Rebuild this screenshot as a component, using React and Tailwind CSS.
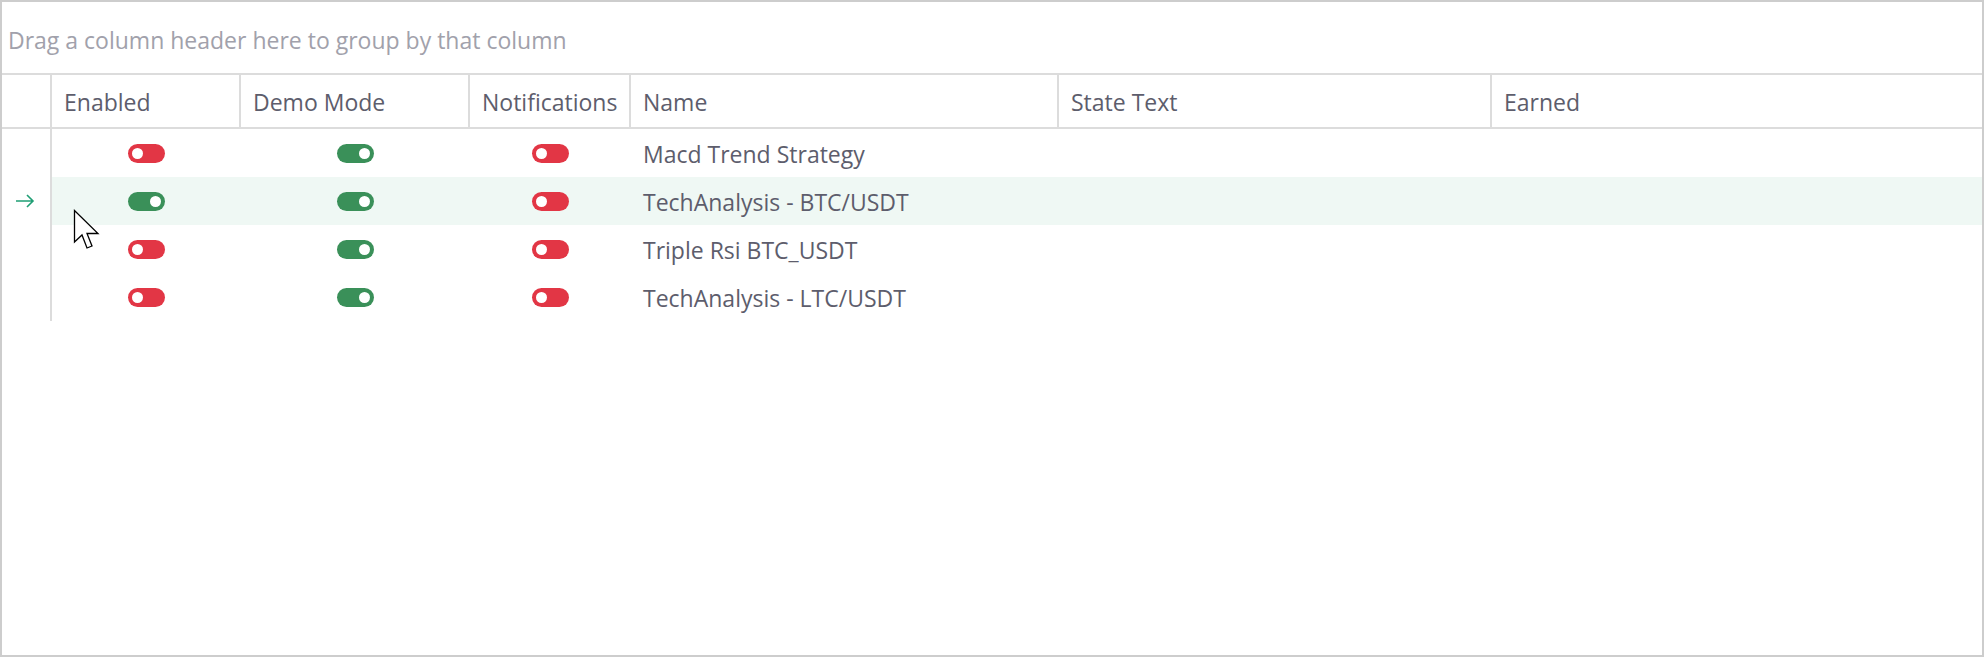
import React from 'react'

const rows = [
  { enabled: false, demo: true, notify: false, name: 'Macd Trend Strategy' },
  { enabled: true, demo: true, notify: false, name: 'TechAnalysis - BTC/USDT', current: true },
  { enabled: false, demo: true, notify: false, name: 'Triple Rsi BTC_USDT' },
  { enabled: false, demo: true, notify: false, name: 'TechAnalysis - LTC/USDT' },
]

function Toggle({ on }) {
  return (
    <div
      className={
        'flex h-[19px] w-[37px] items-center rounded-full px-[4px] ' +
        (on ? 'justify-end bg-[#3a9059]' : 'justify-start bg-[#e23645]')
      }
    >
      <div className="h-[11px] w-[11px] rounded-full bg-white" />
    </div>
  )
}

function HeaderCell({ children, last }) {
  return (
    <div className={'flex items-center pl-[12px] pt-[2px] ' + (last ? '' : 'border-r-2 border-[#dcdcdc]')}>
      {children}
    </div>
  )
}

export default function App() {
  return (
    <div
      className="relative h-[657px] w-[1984px] overflow-hidden border-2 border-[#cdcdcd] bg-white text-[23px] text-[#5d5d6c]"
      style={{ fontFamily: '"Open Sans", "Noto Sans", sans-serif' }}
    >
      <div className="flex h-[71px] items-center pl-[6px] pt-[5px] text-[#a1a1ab]">
        Drag a column header here to group by that column
      </div>

      <div className="grid h-[56px] grid-cols-[50px_189px_229px_161px_428px_433px_1fr] border-y-2 border-[#dcdcdc]">
        <div className="border-r-2 border-[#dcdcdc]" />
        <HeaderCell>Enabled</HeaderCell>
        <HeaderCell>Demo Mode</HeaderCell>
        <HeaderCell>Notifications</HeaderCell>
        <HeaderCell>Name</HeaderCell>
        <HeaderCell>State Text</HeaderCell>
        <HeaderCell last>Earned</HeaderCell>
      </div>

      <div className="flex flex-col">
        {rows.map((r, i) => (
          <div
            key={i}
            className="grid h-[48px] grid-cols-[50px_189px_229px_161px_428px_433px_1fr]"
          >
            <div className="flex items-center border-r-2 border-[#dcdcdc] pl-[13px] text-[#1f9e74]">
              {r.current ? (
                <svg width="20" height="14" viewBox="0 0 20 14" fill="none" stroke="currentColor" strokeWidth="1.6">
                  <path d="M1 7h17M12 1l6 6-6 6" />
                </svg>
              ) : null}
            </div>
            <div className={'flex items-center justify-center ' + (r.current ? 'bg-[#eff8f4]' : '')}>
              <Toggle on={r.enabled} />
            </div>
            <div className={'flex items-center justify-center ' + (r.current ? 'bg-[#eff8f4]' : '')}>
              <Toggle on={r.demo} />
            </div>
            <div className={'flex items-center justify-center ' + (r.current ? 'bg-[#eff8f4]' : '')}>
              <Toggle on={r.notify} />
            </div>
            <div className={'flex items-center pl-[12px] pt-[2px] ' + (r.current ? 'bg-[#eff8f4]' : '')}>
              {r.name}
            </div>
            <div className={r.current ? 'bg-[#eff8f4]' : ''} />
            <div className={r.current ? 'bg-[#eff8f4]' : ''} />
          </div>
        ))}
      </div>

      {/* mouse pointer */}
      <svg className="absolute left-[71px] top-[207px]" width="28" height="42" viewBox="0 0 28 42">
        <path
          d="M1.5 1.5 L1.5 33 L9 26 L14 39 L19 37 L14 24.5 L25 24.5 Z"
          fill="#fff"
          stroke="#000"
          strokeWidth="1.3"
          strokeLinejoin="miter"
        />
      </svg>
    </div>
  )
}
